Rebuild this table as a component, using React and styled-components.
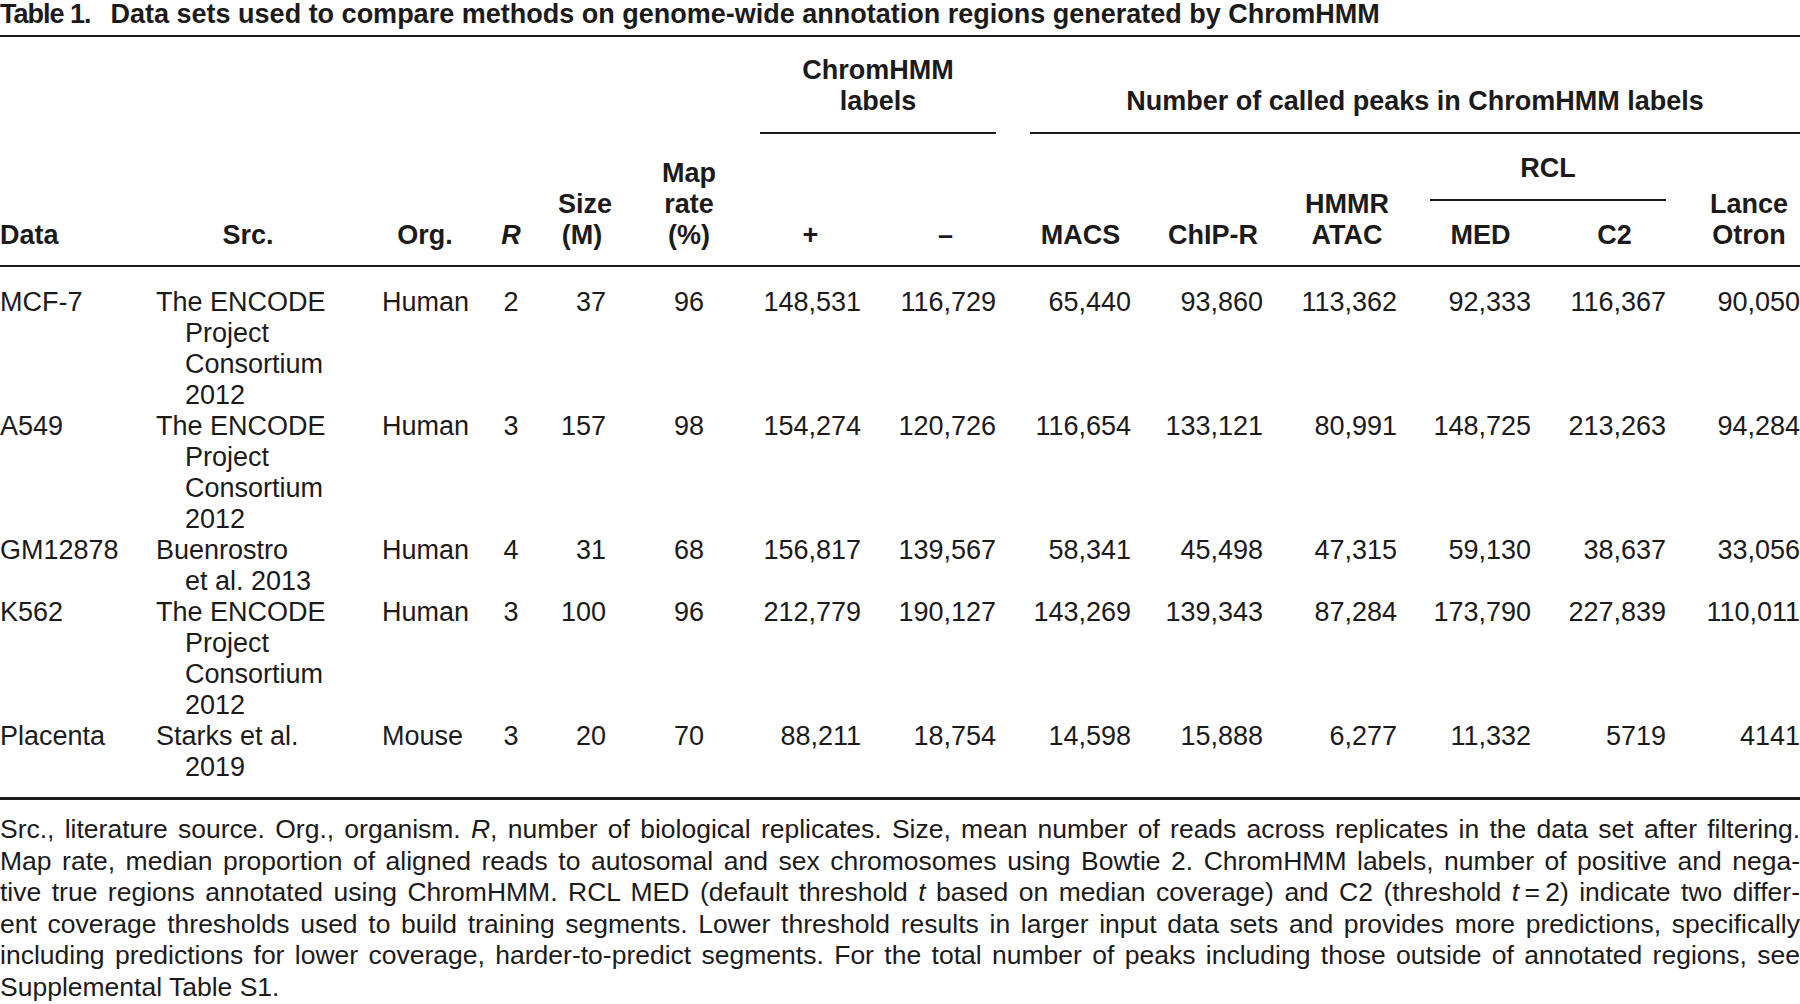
import React from 'react'
import styled, { createGlobalStyle } from 'styled-components'

const GlobalStyle = createGlobalStyle`
  body {
    margin: 0;
    background: #ffffff;
    color: #1c1a1a;
    font-family: "Liberation Sans", Arial, sans-serif;
  }
`

// content width + gap on the left of each column (full px)
const cols = [
  { w: 123, pad: 0, align: 'left' },
  { w: 217, pad: 33, align: 'left' },
  { w: 128, pad: 42, align: 'left' },
  { w: 56, pad: 30, align: 'center' },
  { w: 82, pad: 34, align: 'right' },
  { w: 112, pad: 54, align: 'center' },
  { w: 143, pad: 42, align: 'right' },
  { w: 135, pad: 34, align: 'right' },
  { w: 135, pad: 34, align: 'right' },
  { w: 132, pad: 32, align: 'right' },
  { w: 134, pad: 34, align: 'right' },
  { w: 134, pad: 33, align: 'right' },
  { w: 135, pad: 32, align: 'right' },
  { w: 134, pad: 32, align: 'right' },
]

const encode = ['The ENCODE', 'Project', 'Consortium', '2012']

const rows = [
  ['MCF-7', encode, 'Human', '2', '37', '96', '148,531', '116,729', '65,440', '93,860', '113,362', '92,333', '116,367', '90,050'],
  ['A549', encode, 'Human', '3', '157', '98', '154,274', '120,726', '116,654', '133,121', '80,991', '148,725', '213,263', '94,284'],
  ['GM12878', ['Buenrostro', 'et al. 2013'], 'Human', '4', '31', '68', '156,817', '139,567', '58,341', '45,498', '47,315', '59,130', '38,637', '33,056'],
  ['K562', encode, 'Human', '3', '100', '96', '212,779', '190,127', '143,269', '139,343', '87,284', '173,790', '227,839', '110,011'],
  ['Placenta', ['Starks et al.', '2019'], 'Mouse', '3', '20', '70', '88,211', '18,754', '14,598', '15,888', '6,277', '11,332', '5719', '4141'],
]

const App = () => {
  return (
    <Page>
      <GlobalStyle />
      <Caption>
        <CaptionLabel>Table 1.</CaptionLabel>
        Data sets used to compare methods on genome-wide annotation regions generated by ChromHMM
      </Caption>

      <Table>
        <colgroup>
          {cols.map((c, i) => (
            <col key={i} style={{ width: c.w }} />
          ))}
        </colgroup>
        <thead>
          <tr>
            <Th rowSpan={3} $pad={0} $align="left">Data</Th>
            <Th rowSpan={3} $pad={33}>Src.</Th>
            <Th rowSpan={3} $pad={42}>Org.</Th>
            <Th rowSpan={3} $pad={30}><i>R</i></Th>
            <Th rowSpan={3} $pad={34}>Size<br />(M)</Th>
            <Th rowSpan={3} $pad={54}>Map<br />rate<br />(%)</Th>
            <GroupTh colSpan={2} $pad={42} $top={18}>
              <GroupLabel>ChromHMM<br />labels</GroupLabel>
            </GroupTh>
            <GroupTh colSpan={6} $pad={34} $top={18}>
              <GroupLabel>Number of called peaks in ChromHMM labels</GroupLabel>
            </GroupTh>
          </tr>
          <tr>
            <Th rowSpan={2} $pad={42}>+</Th>
            <Th rowSpan={2} $pad={34}>–</Th>
            <Th rowSpan={2} $pad={34}>MACS</Th>
            <Th rowSpan={2} $pad={32}>ChIP-R</Th>
            <Th rowSpan={2} $pad={34}>HMMR<br />ATAC</Th>
            <GroupTh colSpan={2} $pad={33} $top={19}>
              <GroupLabel>RCL</GroupLabel>
            </GroupTh>
            <Th rowSpan={2} $pad={32}>Lance<br />Otron</Th>
          </tr>
          <tr>
            <Th $pad={33} $top={19}>MED</Th>
            <Th $pad={32} $top={19}>C2</Th>
          </tr>
        </thead>
        <tbody>
          {rows.map((r) => (
            <tr key={r[0]}>
              {r.map((cell, i) =>
                Array.isArray(cell) ? (
                  <Td key={i} $pad={cols[i].pad} $align={cols[i].align}>
                    {cell.map((line, j) => (
                      <SrcLine key={j} $indent={j > 0}>{line}</SrcLine>
                    ))}
                  </Td>
                ) : (
                  <Td key={i} $pad={cols[i].pad} $align={cols[i].align}>{cell}</Td>
                )
              )}
            </tr>
          ))}
        </tbody>
      </Table>

      <Footnote>
        <FootLine>
          Src., literature source. Org., organism. <i>R</i>, number of biological replicates. Size, mean number of reads across replicates in the data set after filtering.
        </FootLine>
        <FootLine>
          Map rate, median proportion of aligned reads to autosomal and sex chromosomes using Bowtie 2. ChromHMM labels, number of positive and nega-
        </FootLine>
        <FootLine>
          tive true regions annotated using ChromHMM. RCL MED (default threshold <i>t</i> based on median coverage) and C2 (threshold <i>t</i>{'\u2009=\u2009'}2) indicate two differ-
        </FootLine>
        <FootLine>
          ent coverage thresholds used to build training segments. Lower threshold results in larger input data sets and provides more predictions, specifically
        </FootLine>
        <FootLine>
          including predictions for lower coverage, harder-to-predict segments. For the total number of peaks including those outside of annotated regions, see
        </FootLine>
        <FootLine $last>Supplemental Table S1.</FootLine>
      </Footnote>
    </Page>
  )
}

export default App

const Page = styled.div`
  width: 1800px;
`
const Caption = styled.div`
  font-size: 27px;
  font-weight: bold;
  line-height: 29px;
  padding-bottom: 6px;
  border-bottom: 2px solid #1c1a1a;
  white-space: nowrap;
`
const CaptionLabel = styled.span`
  margin-right: 20px;
  letter-spacing: -1px;
`
const Table = styled.table`
  width: 1800px;
  table-layout: fixed;
  border-collapse: collapse;
  font-size: 27px;
  line-height: 31px;

  thead {
    border-bottom: 2px solid #1c1a1a;
  }
  tbody {
    border-bottom: 3px solid #1c1a1a;
  }
  tbody tr:first-child td {
    padding-top: 20px;
  }
  tbody tr:last-child td {
    padding-bottom: 14px;
  }
`
const Th = styled.th`
  padding: ${(p) => p.$top || 0}px 0 14px ${(p) => p.$pad}px;
  text-align: ${(p) => p.$align || 'center'};
  vertical-align: bottom;
  font-weight: bold;
  white-space: nowrap;

  i {
    font-style: italic;
  }
`
const GroupTh = styled.th`
  padding: ${(p) => p.$top}px 0 0 ${(p) => p.$pad}px;
  vertical-align: bottom;
  font-weight: bold;
  white-space: nowrap;
`
const GroupLabel = styled.div`
  text-align: center;
  padding-bottom: 15px;
  border-bottom: 2px solid #1c1a1a;
`
const Td = styled.td`
  padding: 0 0 0 ${(p) => p.$pad}px;
  text-align: ${(p) => p.$align};
  vertical-align: top;
  white-space: nowrap;
`
const SrcLine = styled.span`
  display: block;
  padding-left: ${(p) => (p.$indent ? 29 : 0)}px;
`
const Footnote = styled.div`
  margin-top: 14px;
  font-size: 26.5px;
  line-height: 31.5px;
`
const FootLine = styled.div`
  text-align: justify;
  text-align-last: ${(p) => (p.$last ? 'left' : 'justify')};
`
